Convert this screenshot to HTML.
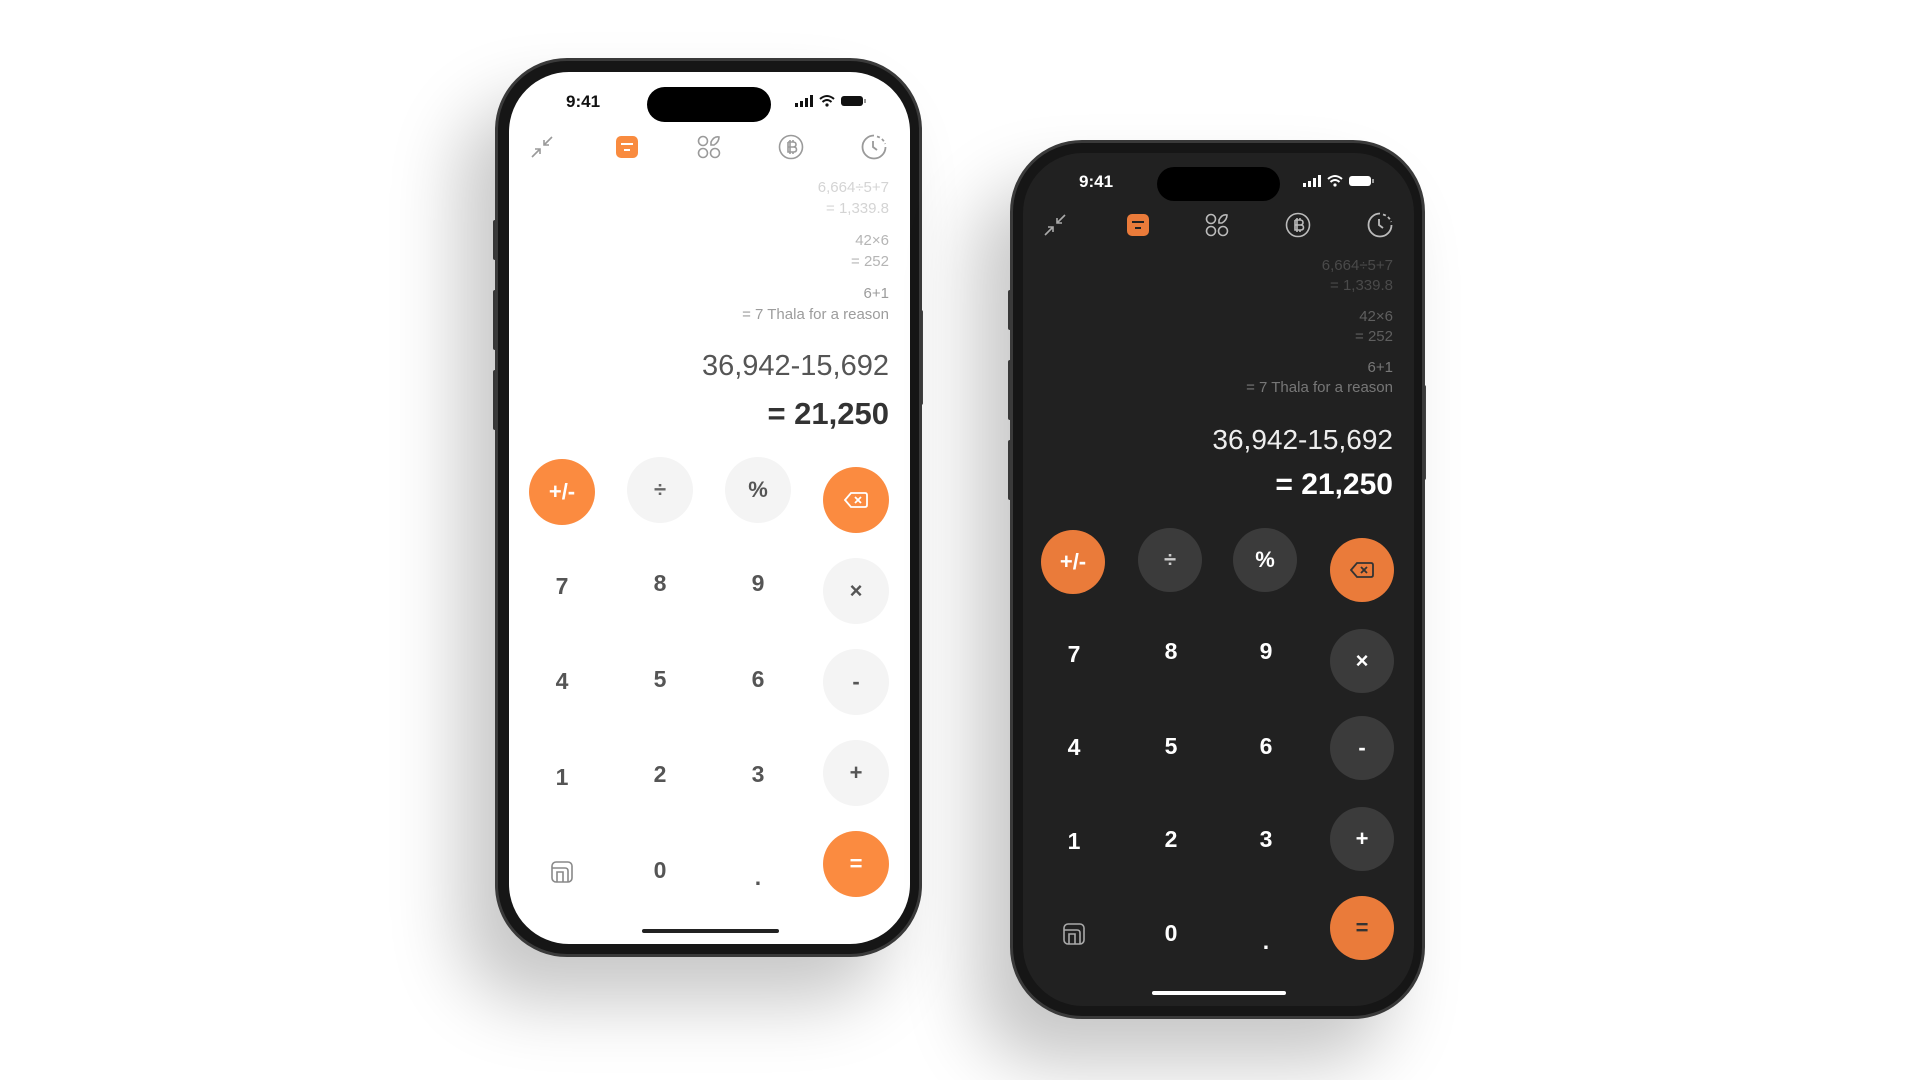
<!DOCTYPE html>
<html><head><meta charset="utf-8"><style>
*{margin:0;padding:0;box-sizing:border-box}
body{width:1920px;height:1080px;background:#fff;position:relative;overflow:hidden;font-family:"Liberation Sans",sans-serif}
.abs{position:absolute}
.frame{position:absolute;border-radius:72px;background:#161616;border:3px solid #3a3a3a;box-shadow:-35px 45px 70px rgba(0,0,0,0.22)}
.screen{position:absolute;border-radius:60px;overflow:hidden}
.b{position:absolute;width:66px;height:66px;border-radius:50%;display:flex;align-items:center;justify-content:center;font-weight:bold;font-size:22px}
.t{position:absolute;width:66px;height:40px;display:flex;align-items:center;justify-content:center;font-weight:bold;font-size:23px}
.h{position:absolute;text-align:right;font-size:15px;white-space:nowrap}
.ic{position:absolute;width:26px;height:26px}
.sb{position:absolute;width:4px;background:#444;border-radius:2px}
</style></head><body>

<!-- LIGHT PHONE -->
<div class="sb" style="left:493px;top:220px;height:40px"></div>
<div class="sb" style="left:493px;top:290px;height:60px"></div>
<div class="sb" style="left:493px;top:370px;height:60px"></div>
<div class="sb" style="left:919px;top:310px;height:95px"></div>
<div class="frame" style="left:495px;top:58px;width:427px;height:899px"></div>
<div class="screen" style="left:509px;top:72px;width:401px;height:872px;background:#fff"></div>
<div class="abs" style="left:647px;top:87px;width:124px;height:35px;border-radius:18px;background:#000"></div>
<div class="abs" style="left:566px;top:92px;font-weight:bold;font-size:17px;color:#111">9:41</div>
<svg class="abs" style="left:795px;top:94px" width="80" height="16" viewBox="0 0 80 16"><rect x="0" y="9" width="3" height="4" fill="#111"/><rect x="5" y="7" width="3" height="6" fill="#111"/><rect x="10" y="4" width="3" height="9" fill="#111"/><rect x="15" y="1" width="3" height="12" fill="#111"/><path d="M25 5 Q32 -1 39 5 M27.5 8 Q32 4 36.5 8" stroke="#111" stroke-width="2" fill="none"/><circle cx="32" cy="11" r="1.6" fill="#111"/><rect x="46" y="2" width="22" height="10" rx="3" fill="#111"/><rect x="69" y="5" width="2" height="4" fill="#999"/></svg>

<svg class="ic" style="left:529px;top:134px" viewBox="0 0 26 26" fill="none" stroke="#9a9a9a" stroke-width="1.6"><path d="M3 23L11 15M6 15H11V20M23 3L15 11M15 6V11H20"/></svg>
<svg class="ic" style="left:614px;top:134px" viewBox="0 0 26 26"><rect x="2" y="2" width="22" height="22" rx="5" fill="#f98b3f"/><path d="M7 10H19M10 16H16" stroke="#fff" stroke-width="2"/></svg>
<svg class="ic" style="left:696px;top:134px" viewBox="0 0 26 26" fill="none" stroke="#9a9a9a" stroke-width="1.6"><circle cx="7" cy="7" r="4.5"/><circle cx="7" cy="19" r="4.5"/><circle cx="19" cy="19" r="4.5"/><path d="M15 11L15 8Q18 2 23 3Q23 8 18 11Z"/></svg>
<svg class="ic" style="left:778px;top:134px" viewBox="0 0 26 26" fill="none" stroke="#9a9a9a" stroke-width="1.6"><circle cx="13" cy="13" r="11.5"/><path d="M10 8H15Q18 8 18 10.5Q18 13 15 13H10M10 13H15.5Q18.5 13 18.5 15.5Q18.5 18 15.5 18H10V8M12 6V20M15 6V8M15 18V20"/></svg>
<svg class="ic" style="left:861px;top:134px" viewBox="0 0 26 26" fill="none" stroke="#9a9a9a" stroke-width="1.8"><path d="M13 1.5A11.5 11.5 0 1 0 24.5 13"/><path d="M16 2.5A11.5 11.5 0 0 1 24.2 10" stroke-dasharray="3 2.5"/><path d="M12 7V13L16 16"/></svg>

<div class="h" style="right:1031px;top:177px;color:#d4d4d4;line-height:21px">6,664÷5+7<br>= 1,339.8</div>
<div class="h" style="right:1031px;top:230px;color:#b5b5b5;line-height:21px">42×6<br>= 252</div>
<div class="h" style="right:1031px;top:283px;color:#9c9c9c;line-height:21px">6+1<br>= 7 Thala for a reason</div>
<div class="h" style="right:1031px;top:350px;color:#555;font-size:29px">36,942-15,692</div>
<div class="h" style="right:1031px;top:396px;color:#333;font-size:31px;font-weight:bold">= 21,250</div>

<div class="b" style="left:529px;top:459px;background:#fb8b40;color:#fff">+/-</div>
<div class="b" style="left:627px;top:457px;background:#f4f4f4;color:#666">÷</div>
<div class="b" style="left:725px;top:457px;background:#f4f4f4;color:#555">%</div>
<div class="b" style="left:823px;top:467px;background:#fb8b40"><svg width="24" height="16" viewBox="0 0 24 16" fill="none" stroke="#fff" stroke-width="1.8"><path d="M7 1H21Q23 1 23 3V13Q23 15 21 15H7L1 8Z"/><path d="M11 5L17 11M17 5L11 11"/></svg></div>
<div class="t" style="left:529px;top:566px;color:#555">7</div>
<div class="t" style="left:627px;top:563px;color:#555">8</div>
<div class="t" style="left:725px;top:563px;color:#555">9</div>
<div class="b" style="left:823px;top:558px;background:#f4f4f4;color:#555">×</div>
<div class="t" style="left:529px;top:661px;color:#555">4</div>
<div class="t" style="left:627px;top:659px;color:#555">5</div>
<div class="t" style="left:725px;top:659px;color:#555">6</div>
<div class="b" style="left:823px;top:649px;background:#f4f4f4;color:#555">-</div>
<div class="t" style="left:529px;top:757px;color:#555">1</div>
<div class="t" style="left:627px;top:754px;color:#555">2</div>
<div class="t" style="left:725px;top:754px;color:#555">3</div>
<div class="b" style="left:823px;top:740px;background:#f4f4f4;color:#555">+</div>
<svg class="abs" style="left:551px;top:861px" width="22" height="22" viewBox="0 0 22 22" fill="none" stroke="#888" stroke-width="1.6"><rect x="1" y="1" width="20" height="20" rx="4"/><path d="M1 7H14Q17 7 17 10V21M6 21V11H12V21"/></svg>
<div class="t" style="left:627px;top:850px;color:#555">0</div>
<div class="t" style="left:725px;top:857px;color:#555">.</div>
<div class="b" style="left:823px;top:831px;background:#fb8b40;color:#fff">=</div>
<div class="abs" style="left:642px;top:929px;width:137px;height:4px;border-radius:2px;background:#222"></div>

<!-- DARK PHONE -->
<div class="sb" style="left:1008px;top:290px;height:40px"></div>
<div class="sb" style="left:1008px;top:360px;height:60px"></div>
<div class="sb" style="left:1008px;top:440px;height:60px"></div>
<div class="sb" style="left:1422px;top:385px;height:95px"></div>
<div class="frame" style="left:1010px;top:140px;width:415px;height:879px"></div>
<div class="screen" style="left:1023px;top:153px;width:391px;height:853px;background:#212121"></div>
<div class="abs" style="left:1157px;top:167px;width:123px;height:34px;border-radius:17px;background:#000"></div>
<div class="abs" style="left:1079px;top:172px;font-weight:bold;font-size:17px;color:#fff">9:41</div>
<svg class="abs" style="left:1303px;top:174px" width="80" height="16" viewBox="0 0 80 16"><rect x="0" y="9" width="3" height="4" fill="#fff"/><rect x="5" y="7" width="3" height="6" fill="#fff"/><rect x="10" y="4" width="3" height="9" fill="#fff"/><rect x="15" y="1" width="3" height="12" fill="#fff"/><path d="M25 5 Q32 -1 39 5 M27.5 8 Q32 4 36.5 8" stroke="#fff" stroke-width="2" fill="none"/><circle cx="32" cy="11" r="1.6" fill="#fff"/><rect x="46" y="2" width="22" height="10" rx="3" fill="#fff"/><rect x="69" y="5" width="2" height="4" fill="#999"/></svg>

<svg class="ic" style="left:1042px;top:212px" viewBox="0 0 26 26" fill="none" stroke="#aaa" stroke-width="1.6"><path d="M3 23L11 15M6 15H11V20M23 3L15 11M15 6V11H20"/></svg>
<svg class="ic" style="left:1125px;top:212px" viewBox="0 0 26 26"><rect x="2" y="2" width="22" height="22" rx="5" fill="#ea7b3a"/><path d="M7 10H19M10 16H16" stroke="#222" stroke-width="2"/></svg>
<svg class="ic" style="left:1204px;top:212px" viewBox="0 0 26 26" fill="none" stroke="#bbb" stroke-width="1.6"><circle cx="7" cy="7" r="4.5"/><circle cx="7" cy="19" r="4.5"/><circle cx="19" cy="19" r="4.5"/><path d="M15 11L15 8Q18 2 23 3Q23 8 18 11Z"/></svg>
<svg class="ic" style="left:1285px;top:212px" viewBox="0 0 26 26" fill="none" stroke="#bbb" stroke-width="1.6"><circle cx="13" cy="13" r="11.5"/><path d="M10 8H15Q18 8 18 10.5Q18 13 15 13H10M10 13H15.5Q18.5 13 18.5 15.5Q18.5 18 15.5 18H10V8M12 6V20M15 6V8M15 18V20"/></svg>
<svg class="ic" style="left:1367px;top:212px" viewBox="0 0 26 26" fill="none" stroke="#bbb" stroke-width="1.8"><path d="M13 1.5A11.5 11.5 0 1 0 24.5 13"/><path d="M16 2.5A11.5 11.5 0 0 1 24.2 10" stroke-dasharray="3 2.5"/><path d="M12 7V13L16 16"/></svg>

<div class="h" style="right:527px;top:256px;color:#4a4a4a;line-height:20px">6,664÷5+7<br>= 1,339.8</div>
<div class="h" style="right:527px;top:307px;color:#5f5f5f;line-height:20px">42×6<br>= 252</div>
<div class="h" style="right:527px;top:358px;color:#777;line-height:20px">6+1<br>= 7 Thala for a reason</div>
<div class="h" style="right:527px;top:424px;color:#eee;font-size:28px">36,942-15,692</div>
<div class="h" style="right:527px;top:468px;color:#fff;font-size:30px;font-weight:bold">= 21,250</div>

<div class="b" style="left:1041px;top:530px;background:#ea7b3a;color:#fff;width:64px;height:64px">+/-</div>
<div class="b" style="left:1138px;top:528px;background:#3b3b3b;color:#ccc;width:64px;height:64px">÷</div>
<div class="b" style="left:1233px;top:528px;background:#3b3b3b;color:#fff;width:64px;height:64px">%</div>
<div class="b" style="left:1330px;top:538px;background:#ea7b3a;width:64px;height:64px"><svg width="24" height="16" viewBox="0 0 24 16" fill="none" stroke="#333" stroke-width="1.8"><path d="M7 1H21Q23 1 23 3V13Q23 15 21 15H7L1 8Z"/><path d="M11 5L17 11M17 5L11 11"/></svg></div>
<div class="t" style="left:1041px;top:634px;color:#fff">7</div>
<div class="t" style="left:1138px;top:631px;color:#fff">8</div>
<div class="t" style="left:1233px;top:631px;color:#fff">9</div>
<div class="b" style="left:1330px;top:629px;background:#3b3b3b;color:#fff;width:64px;height:64px">×</div>
<div class="t" style="left:1041px;top:727px;color:#fff">4</div>
<div class="t" style="left:1138px;top:726px;color:#fff">5</div>
<div class="t" style="left:1233px;top:726px;color:#fff">6</div>
<div class="b" style="left:1330px;top:716px;background:#3b3b3b;color:#fff;width:64px;height:64px">-</div>
<div class="t" style="left:1041px;top:821px;color:#fff">1</div>
<div class="t" style="left:1138px;top:819px;color:#fff">2</div>
<div class="t" style="left:1233px;top:819px;color:#fff">3</div>
<div class="b" style="left:1330px;top:807px;background:#3b3b3b;color:#fff;width:64px;height:64px">+</div>
<svg class="abs" style="left:1063px;top:923px" width="22" height="22" viewBox="0 0 22 22" fill="none" stroke="#aaa" stroke-width="1.6"><rect x="1" y="1" width="20" height="20" rx="4"/><path d="M1 7H14Q17 7 17 10V21M6 21V11H12V21"/></svg>
<div class="t" style="left:1138px;top:913px;color:#fff">0</div>
<div class="t" style="left:1233px;top:921px;color:#fff">.</div>
<div class="b" style="left:1330px;top:896px;background:#ea7b3a;color:#333;width:64px;height:64px">=</div>
<div class="abs" style="left:1152px;top:991px;width:134px;height:4px;border-radius:2px;background:#fff"></div>

</body></html>
